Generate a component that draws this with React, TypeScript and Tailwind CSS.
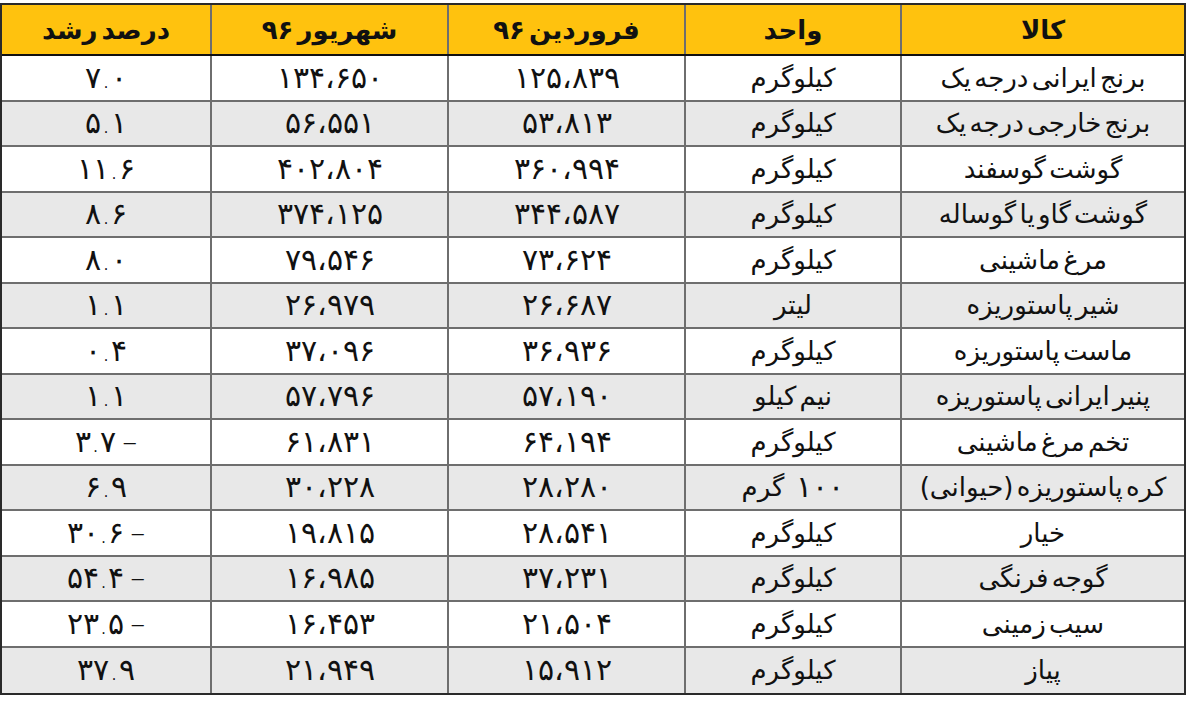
import React from "react";

type Row = { name: string; unit: React.ReactNode; far: string; sha: string; pct: string };

const num = "text-[30px] font-extralight tracking-[1px]";

const rows: Row[] = [
  { name: "برنج ایرانی درجه یک", unit: "کیلوگرم", far: "۱۲۵،۸۳۹", sha: "۱۳۴،۶۵۰", pct: "۷.۰" },
  { name: "برنج خارجی درجه یک", unit: "کیلوگرم", far: "۵۳،۸۱۳", sha: "۵۶،۵۵۱", pct: "۵.۱" },
  { name: "گوشت گوسفند", unit: "کیلوگرم", far: "۳۶۰،۹۹۴", sha: "۴۰۲،۸۰۴", pct: "۱۱.۶" },
  { name: "گوشت گاو یا گوساله", unit: "کیلوگرم", far: "۳۴۴،۵۸۷", sha: "۳۷۴،۱۲۵", pct: "۸.۶" },
  { name: "مرغ ماشینی", unit: "کیلوگرم", far: "۷۳،۶۲۴", sha: "۷۹،۵۴۶", pct: "۸.۰" },
  { name: "شیر پاستوریزه", unit: "لیتر", far: "۲۶،۶۸۷", sha: "۲۶،۹۷۹", pct: "۱.۱" },
  { name: "ماست پاستوریزه", unit: "کیلوگرم", far: "۳۶،۹۳۶", sha: "۳۷،۰۹۶", pct: "۰.۴" },
  { name: "پنیر ایرانی پاستوریزه", unit: "نیم کیلو", far: "۵۷،۱۹۰", sha: "۵۷،۷۹۶", pct: "۱.۱" },
  { name: "تخم مرغ ماشینی", unit: "کیلوگرم", far: "۶۴،۱۹۴", sha: "۶۱،۸۳۱", pct: "۳.۷\u2009–" },
  {
    name: "کره پاستوریزه (حیوانی)",
    unit: (
      <span className="flex items-center gap-[12px]">
        <span className={`${num} tracking-[4px]`}>۱۰۰</span>
        <span>گرم</span>
      </span>
    ),
    far: "۲۸،۲۸۰",
    sha: "۳۰،۲۲۸",
    pct: "۶.۹",
  },
  { name: "خیار", unit: "کیلوگرم", far: "۲۸،۵۴۱", sha: "۱۹،۸۱۵", pct: "۳۰.۶\u2009–" },
  { name: "گوجه فرنگی", unit: "کیلوگرم", far: "۳۷،۲۳۱", sha: "۱۶،۹۸۵", pct: "۵۴.۴\u2009–" },
  { name: "سیب زمینی", unit: "کیلوگرم", far: "۲۱،۵۰۴", sha: "۱۶،۴۵۳", pct: "۲۳.۵\u2009–" },
  { name: "پیاز", unit: "کیلوگرم", far: "۱۵،۹۱۲", sha: "۲۱،۹۴۹", pct: "۳۷.۹" },
];

const grid = "grid grid-cols-[284px_216px_237px_237px_208px]";
const cell = "flex items-center justify-center border-l-2 border-[#6e6e6e] last:border-l-0";

export default function App() {
  return (
    <div className="w-[1186px] h-[716px] bg-white pt-[3px]" style={{ fontFamily: '"DejaVu Sans", sans-serif' }}>
      <div dir="rtl" className="w-[1186px] border-2 border-[#2a2a2a] text-[#111] text-[26px] leading-none [word-spacing:-5px]">
        <div className={`${grid} h-[51px] bg-[#ffc20e] border-b-2 border-[#111] font-bold`}>
          <div className={`${cell} border-[#5c4a14]`}>کالا</div>
          <div className={`${cell} border-[#5c4a14]`}>واحد</div>
          <div className={`${cell} border-[#5c4a14]`}>فروردین ۹۶</div>
          <div className={`${cell} border-[#5c4a14]`}>شهریور ۹۶</div>
          <div className={`${cell} border-[#5c4a14]`}>درصد رشد</div>
        </div>
        {rows.map((r, i) => (
          <div
            key={i}
            className={`${grid} h-[45.5px] ${i % 2 === 1 ? "bg-[#e8e8e8]" : "bg-white"} ${i < rows.length - 1 ? "border-b-2 border-[#6e6e6e]" : ""}`}
          >
            <div className={cell}>{r.name}</div>
            <div className={cell}>{r.unit}</div>
            <div className={cell}><span dir="ltr" className={num}>{r.far}</span></div>
            <div className={cell}><span dir="ltr" className={num}>{r.sha}</span></div>
            <div className={cell}><span dir="ltr" className={`${num} [word-spacing:0px]`}>{r.pct}</span></div>
          </div>
        ))}
      </div>
    </div>
  );
}
